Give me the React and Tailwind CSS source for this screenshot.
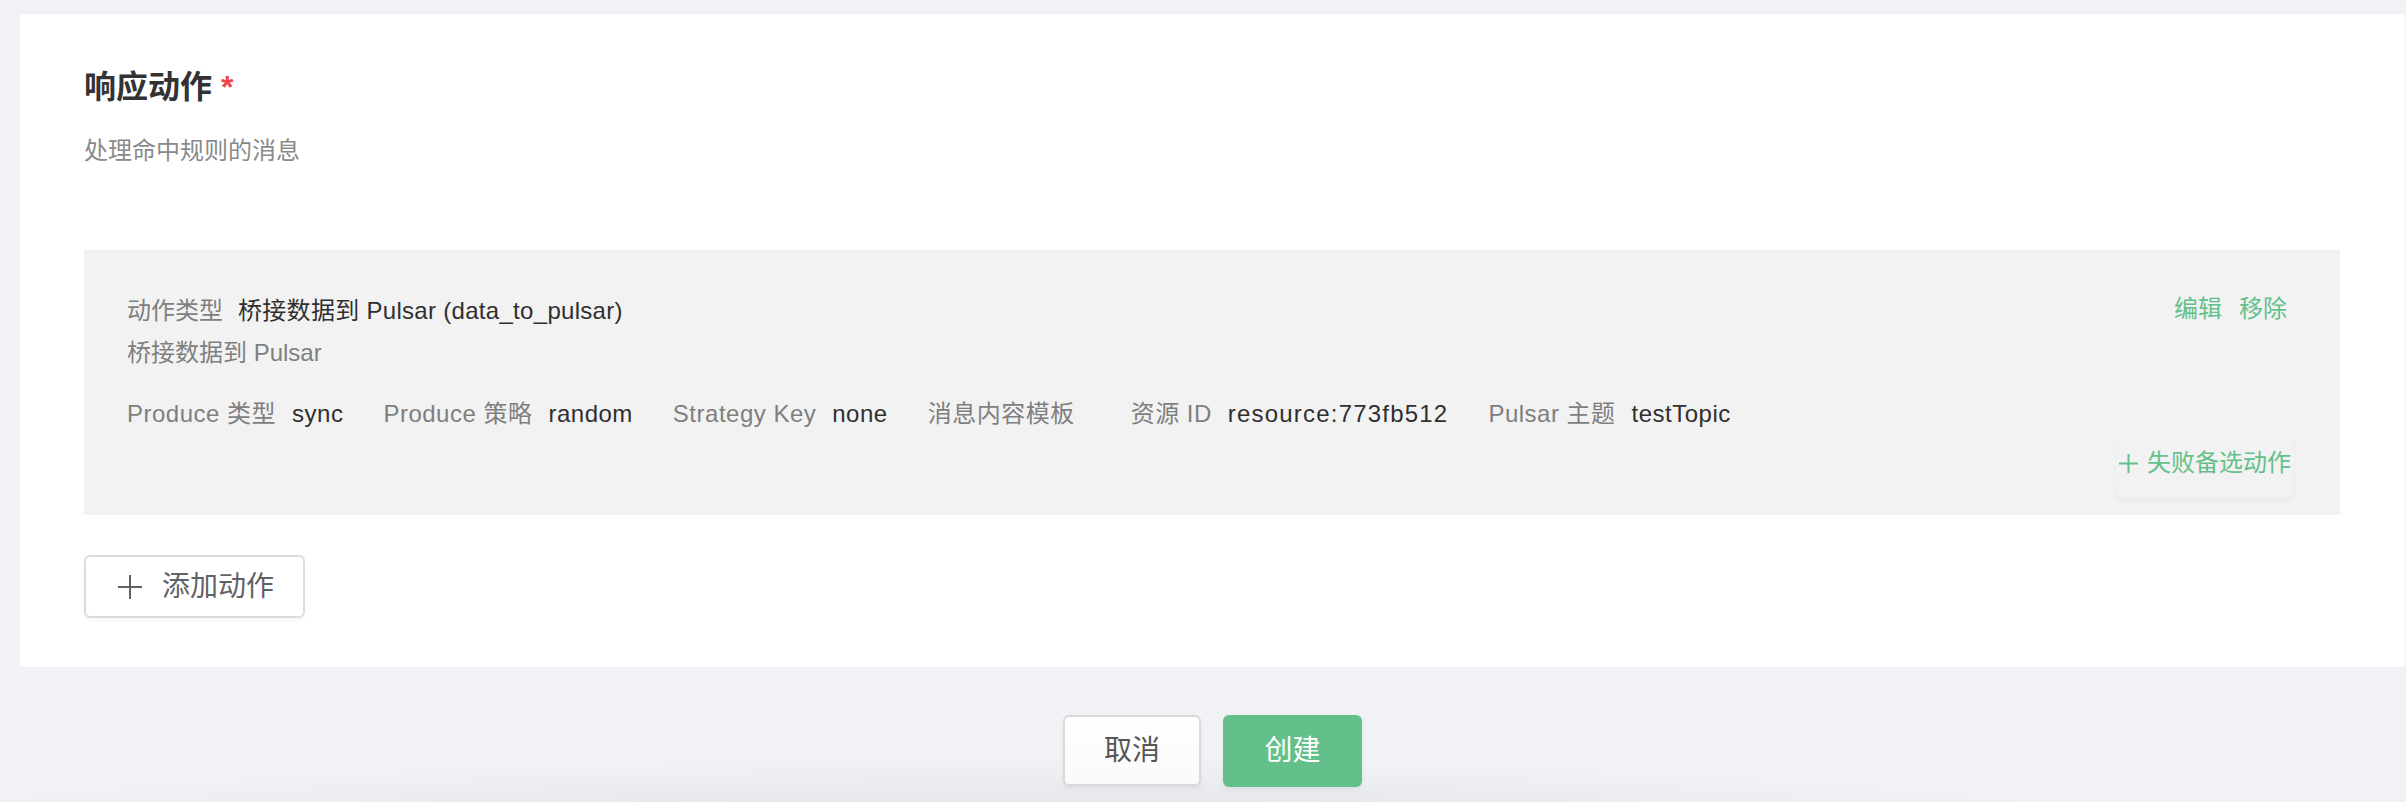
import React from "react";

function Plus({ size = 20, color = "currentColor", stroke = 2 }) {
  return (
    <svg width={size} height={size} viewBox={`0 0 ${size} ${size}`} fill="none">
      <line x1={size / 2} y1="0" x2={size / 2} y2={size} stroke={color} strokeWidth={stroke} />
      <line x1="0" y1={size / 2} x2={size} y2={size / 2} stroke={color} strokeWidth={stroke} />
    </svg>
  );
}

function Item({ label, value, wide }) {
  return (
    <div className="flex mr-[40px] whitespace-nowrap tracking-[0.5px]">
      <span className="text-[#7f7f7f] mr-[16px]">{label}</span>
      <span className={wide ? "text-[#2f2f2f] tracking-[1.2px]" : "text-[#2f2f2f]"}>{value}</span>
    </div>
  );
}

export default function App() {
  return (
    <div className="h-[802px] overflow-hidden bg-[#f0f2f5] bg-[radial-gradient(ellipse_1150px_70px_at_1000px_828px,rgba(0,0,0,0.07),rgba(0,0,0,0))] pl-[20px] pr-px pt-[14px] font-['Liberation_Sans','Noto_Sans_CJK_SC',sans-serif]">
      <div className="bg-white rounded-[4px] pl-[64px] pr-[65px] pt-[51px] pb-[49px]">
        <h2 className="text-[32px] leading-[44px] font-bold text-[#333]">
          响应动作 <span className="text-[#f04545]">*</span>
        </h2>
        <p className="mt-[25px] text-[24px] leading-[34px] text-[#8a8a8a]">处理命中规则的消息</p>

        <div className="mt-[82px] bg-[#f2f2f2] pl-[43px] pr-[46px] pt-[44px] pb-[17px] text-[24px] leading-[34px]">
          <div className="flex justify-between items-start">
            <div>
              <div className="flex">
                <span className="text-[#7f7f7f] mr-[15px]">动作类型</span>
                <span className="text-[#2f2f2f] tracking-[0.3px]">桥接数据到 Pulsar (data_to_pulsar)</span>
              </div>
              <div className="mt-[8px] text-[#7f7f7f]">桥接数据到 Pulsar</div>
            </div>
            <div className="flex gap-[17px] mr-[7px] -mt-[2px] text-[#64c08b]">
              <span>编辑</span>
              <span>移除</span>
            </div>
          </div>

          <div className="mt-[27px] flex">
            <Item label="Produce 类型" value="sync" />
            <Item label="Produce 策略" value="random" />
            <Item label="Strategy Key" value="none" />
            <Item label="消息内容模板" value="" />
            <Item label="资源 ID" value="resource:773fb512" wide />
            <Item label="Pulsar 主题" value="testTopic" />
          </div>

          <div className="flex justify-end -mt-[3px]">
            <button className="h-[70px] pl-[3px] pr-[3px] flex items-center gap-[9px] text-[#64c08b] rounded-[8px] shadow-[0_4px_4px_rgba(0,0,0,0.035)]">
              <Plus size={19} color="#64c08b" stroke={2} />
              <span>失败备选动作</span>
            </button>
          </div>
        </div>

        <button className="mt-[40px] w-[221px] h-[63px] border-2 border-[#dcdcdc] rounded-[6px] bg-white flex items-center pl-[32px] text-[28px] text-[#606266] shadow-[0_3px_3px_rgba(0,0,0,0.03)]">
          <Plus size={24} color="#606266" stroke={2} />
          <span className="ml-[20px]">添加动作</span>
        </button>
      </div>

      <div className="flex justify-center gap-[22px] pt-[48px]">
        <button className="w-[138px] h-[71px] border-2 border-[#d9d9d9] rounded-[6px] bg-[linear-gradient(#ffffff,#f9f9f9)] text-[28px] text-[#555] shadow-[0_3px_4px_rgba(0,0,0,0.05)]">
          取消
        </button>
        <button className="w-[139px] h-[72px] rounded-[6px] bg-[#64c08b] text-[28px] text-white shadow-[0_3px_4px_rgba(0,0,0,0.05)]">
          创建
        </button>
      </div>
    </div>
  );
}
